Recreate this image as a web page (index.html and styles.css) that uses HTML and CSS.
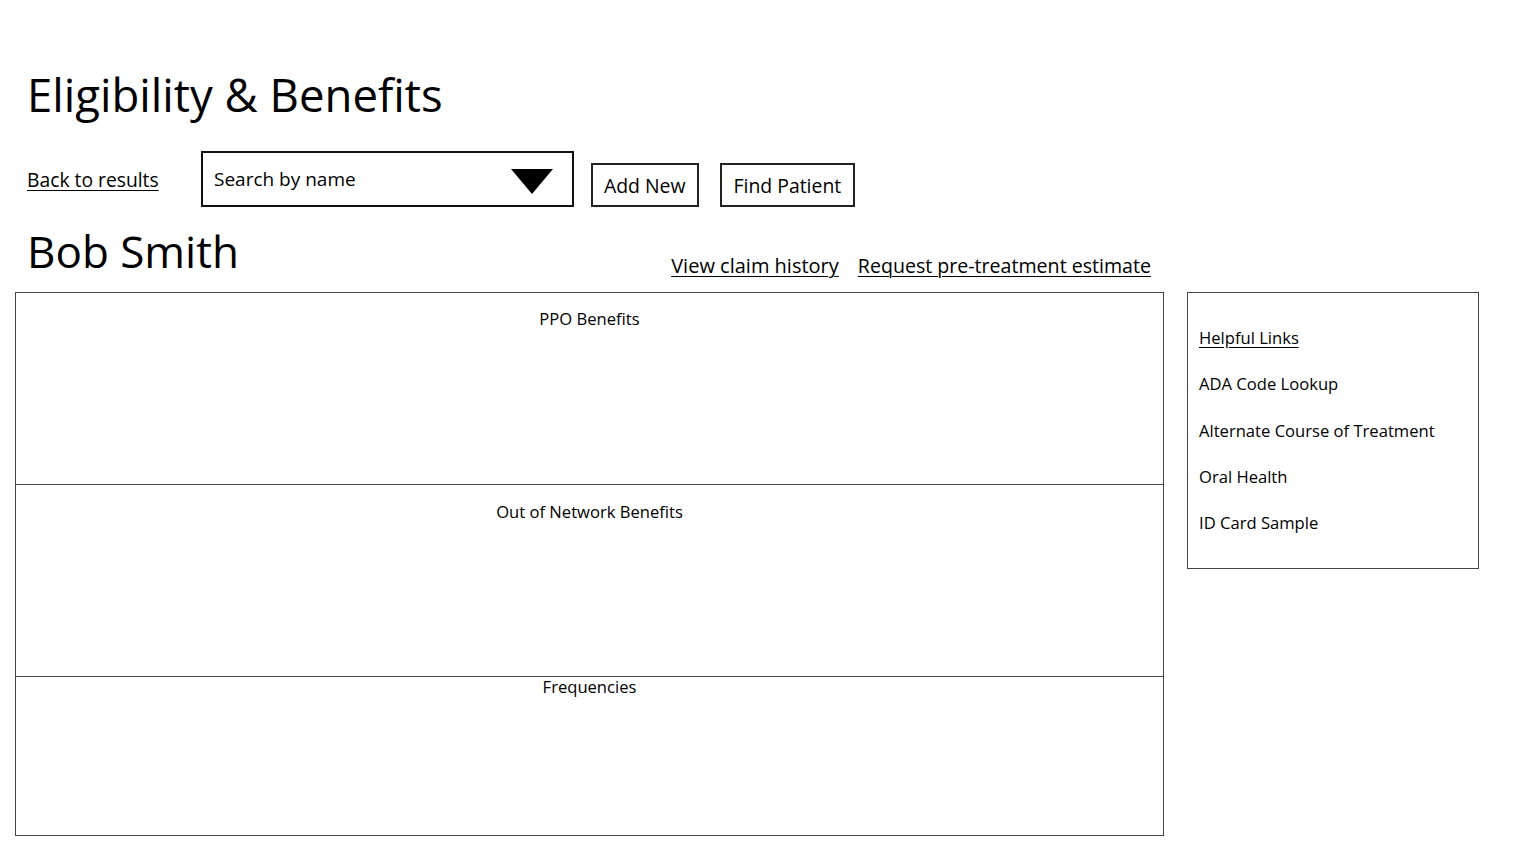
FILE: index.html
```html
<!DOCTYPE html>
<html lang="en">
<head>
<meta charset="utf-8">
<title>Eligibility &amp; Benefits</title>
<link rel="stylesheet" href="styles.css">
</head>
<body>
<div class="page">
  <h1 class="title">Eligibility &amp; Benefits</h1>
  <div class="toolbar">
    <a class="link back" href="#">Back to results</a>
    <div class="select">
      <span class="select-text">Search by name</span>
      <svg class="caret" width="42" height="25" viewBox="0 0 42 25"><polygon points="0,0 42,0 21,25" fill="#000"/></svg>
    </div>
    <button class="btn">Add New</button>
    <button class="btn">Find Patient</button>
  </div>
  <div class="name-row">
    <h2 class="name">Bob Smith</h2>
    <div class="actions">
      <a class="link" href="#">View claim history</a>
      <a class="link" href="#">Request pre-treatment estimate</a>
    </div>
  </div>
  <div class="content">
    <div class="main-box">
      <section class="panel ppo"><div class="panel-title">PPO Benefits</div></section>
      <section class="panel oon"><div class="panel-title">Out of Network Benefits</div></section>
      <section class="panel freq"><div class="panel-title">Frequencies</div></section>
    </div>
    <aside class="side-box">
      <a class="side-link underline" href="#">Helpful Links</a>
      <a class="side-link" href="#">ADA Code Lookup</a>
      <a class="side-link" href="#">Alternate Course of Treatment</a>
      <a class="side-link" href="#">Oral Health</a>
      <a class="side-link" href="#">ID Card Sample</a>
    </aside>
  </div>
</div>
</body>
</html>
```

FILE: styles.css
```css
* { box-sizing: border-box; }
html, body { margin: 0; padding: 0; background: #fff; }
body {
  font-family: "Open Sans", "Liberation Sans", sans-serif;
  color: #000;
}
.page { padding: 0 0 0 15px; }
.title {
  margin: 0;
  padding: 62px 0 0 12px;
  font-size: 45.5px;
  font-weight: 400;
  line-height: 64px;
}
.toolbar {
  display: flex;
  align-items: flex-end;
  margin-top: 25px;
  padding-left: 12px;
}
.link {
  color: #000;
  text-decoration: underline;
  text-underline-offset: 3px;
  text-decoration-thickness: 1px;
}
.back {
  font-size: 19.3px;
  line-height: 26px;
  margin-bottom: 14px;
  width: 174px;
}
.select {
  width: 373px;
  height: 56px;
  border: 2px solid #111;
  display: flex;
  align-items: center;
  justify-content: space-between;
  padding: 0 19px 0 11px;
}
.select-text { font-size: 19px; }
.caret { margin-top: 4px; }
.btn {
  font-family: inherit;
  font-size: 19.4px;
  background: #fff;
  color: #000;
  border: 2px solid #222;
  border-radius: 0;
  height: 44px;
  padding: 0 11px;
  margin-left: 17px;
}
.btn + .btn { margin-left: 21px; padding: 0 12px; }
.name-row {
  display: flex;
  align-items: flex-end;
  width: 1148px;
  padding-left: 12px;
  padding-right: 12px;
  margin-top: 18px;
  height: 67px;
}
.name {
  margin: 0 0 13px 0;
  font-size: 44px;
  font-weight: 400;
  line-height: 56px;
  flex: 1;
}
.actions {
  display: flex;
  gap: 19px;
  font-size: 19.6px;
  margin-bottom: 13px;
}
.actions .link:first-child { font-size: 20px; }
.content {
  display: flex;
  align-items: flex-start;
  gap: 23px;
}
.main-box {
  width: 1149px;
  flex: none;
  border: 1px solid #444;
  display: flex;
  flex-direction: column;
}
.panel {
  display: flex;
  justify-content: center;
}
.panel + .panel { border-top: 1px solid #444; }
.panel-title { font-size: 16.6px; line-height: 24px; }
.ppo { height: 191px; padding-top: 14px; }
.oon { height: 192px; padding-top: 15px; }
.freq { height: 159px; }
.freq .panel-title { line-height: 20px; }
.side-box {
  width: 292px;
  height: 277px;
  flex: none;
  border: 1px solid #444;
  display: flex;
  flex-direction: column;
  padding: 34px 0 0 11px;
  gap: 24.3px;
}
.side-link {
  font-size: 16.6px;
  line-height: 22px;
  color: #000;
  text-decoration: none;
}
.side-link.underline {
  text-decoration: underline;
  text-underline-offset: 3px;
}
```
